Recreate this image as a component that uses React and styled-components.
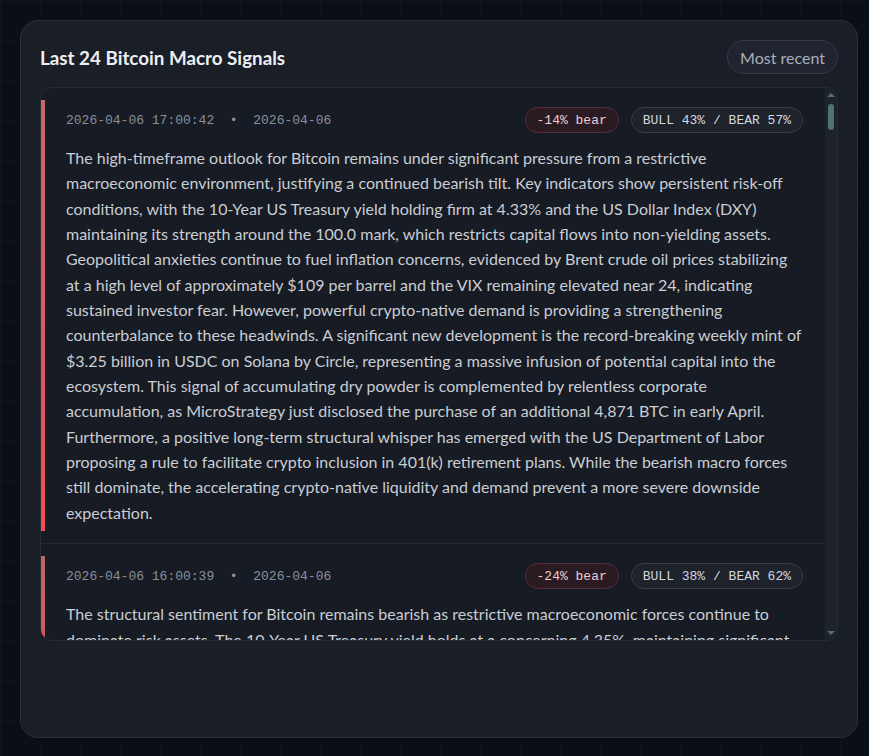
import React from "react";
import styled, { createGlobalStyle } from "styled-components";

const signals = [
  {
    time: "2026-04-06 17:00:42",
    date: "2026-04-06",
    delta: "-14% bear",
    split: "BULL 43% / BEAR 57%",
    text:
      "The high-timeframe outlook for Bitcoin remains under significant pressure from a restrictive macroeconomic environment, justifying a continued bearish tilt. Key indicators show persistent risk-off conditions, with the 10-Year US Treasury yield holding firm at 4.33% and the US Dollar Index (DXY) maintaining its strength around the 100.0 mark, which restricts capital flows into non-yielding assets. Geopolitical anxieties continue to fuel inflation concerns, evidenced by Brent crude oil prices stabilizing at a high level of approximately $109 per barrel and the VIX remaining elevated near 24, indicating sustained investor fear. However, powerful crypto-native demand is providing a strengthening counterbalance to these headwinds. A significant new development is the record-breaking weekly mint of $3.25 billion in USDC on Solana by Circle, representing a massive infusion of potential capital into the ecosystem. This signal of accumulating dry powder is complemented by relentless corporate accumulation, as MicroStrategy just disclosed the purchase of an additional 4,871 BTC in early April. Furthermore, a positive long-term structural whisper has emerged with the US Department of Labor proposing a rule to facilitate crypto inclusion in 401(k) retirement plans. While the bearish macro forces still dominate, the accelerating crypto-native liquidity and demand prevent a more severe downside expectation.",
  },
  {
    time: "2026-04-06 16:00:39",
    date: "2026-04-06",
    delta: "-24% bear",
    split: "BULL 38% / BEAR 62%",
    text:
      "The structural sentiment for Bitcoin remains bearish as restrictive macroeconomic forces continue to dominate risk assets. The 10-Year US Treasury yield holds at a concerning 4.35%, maintaining significant pressure on liquidity, while the US Dollar Index (DXY) stays firm near 100.2. Elevated energy prices and a VIX reading above 23 reinforce a cautious, risk-off posture among investors, even as crypto-native flows offer partial support.",
  },
];

const GlobalStyle = createGlobalStyle`
  html, body {
    margin: 0;
    background-color: #0a0e17;
    background-image:
      linear-gradient(rgba(255,255,255,0.018) 1px, transparent 1px),
      linear-gradient(90deg, rgba(255,255,255,0.018) 1px, transparent 1px);
    background-size: 40px 40px;
  }
  * { box-sizing: border-box; }
`;

const Page = styled.div`
  padding: 20px 11px 18px 20px;
  font-family: Lato, "Noto Sans", sans-serif;
`;

const Card = styled.section`
  height: 718px;
  padding: 19px 19px;
  background: #1a1e27;
  border: 1px solid #2a2f3a;
  border-radius: 18px;
  display: flex;
  flex-direction: column;
  gap: 13px;
`;

const Header = styled.div`
  display: flex;
  align-items: center;
  justify-content: space-between;
`;

const Title = styled.h2`
  margin: 0;
  font-size: 18.8px;
  font-weight: 700;
  color: #eceef2;
`;

const SortButton = styled.button`
  height: 34px;
  padding: 0 12px;
  border-radius: 17px;
  border: 1px solid #333a46;
  background: #1f2430;
  color: #a9afb9;
  font-family: inherit;
  font-size: 16px;
`;

const ListFrame = styled.div`
  height: 554px;
  display: flex;
  overflow: hidden;
  background: #171b23;
  border: 1px solid #262b35;
  border-radius: 12px;
`;

const Scroller = styled.div`
  flex: 1;
  min-width: 0;
  overflow-y: auto;
  scrollbar-width: none;
  &::-webkit-scrollbar {
    display: none;
  }
`;

/* thin scrollbar rail, as the browser draws it with scrollbar-color */
const Rail = styled.div`
  width: 12px;
  flex: none;
  background: #1e232b;
  display: flex;
  flex-direction: column;
  align-items: center;
`;

const RailArrow = styled.div`
  height: 14px;
  display: flex;
  align-items: center;
  justify-content: center;
  &::before {
    content: "";
    border-left: 4px solid transparent;
    border-right: 4px solid transparent;
    ${({ $down }) =>
      $down ? "border-top: 4px solid #4b7470;" : "border-bottom: 4px solid #4b7470;"}
  }
`;

const RailTrack = styled.div`
  flex: 1;
  padding-top: 2px;
`;

const Thumb = styled.div`
  width: 6px;
  height: 26px;
  border-radius: 3px;
  background: #4b7470;
`;

const Row = styled.article`
  padding: 12px 0;
  border-bottom: 1px solid #262b34;
`;

const Entry = styled.div`
  border-left: 4px solid transparent;
  border-image: linear-gradient(${({ $from }) => $from}, ${({ $to }) => $to}) 1;
  padding: 7px 22px 6px 21px;
`;

const Meta = styled.div`
  display: flex;
  align-items: center;
  justify-content: space-between;
  height: 26px;
`;

const Stamp = styled.span`
  font-family: "Liberation Mono", monospace;
  font-size: 13px;
  color: #8a909a;
  white-space: pre;
`;

const Badges = styled.div`
  display: flex;
  gap: 12px;
`;

const Badge = styled.span`
  height: 26px;
  display: inline-flex;
  align-items: center;
  padding: 0 11px;
  border-radius: 13px;
  font-family: "Liberation Mono", monospace;
  font-size: 13px;
  color: ${({ $tone }) => ($tone === "bear" ? "#f1cccc" : "#d2d8e0")};
  background: ${({ $tone }) => ($tone === "bear" ? "#2a1b22" : "#1d222b")};
  border: 1px solid ${({ $tone }) => ($tone === "bear" ? "#5a2c35" : "#373d48")};
`;

const Body = styled.p`
  margin: 12px -2px 0 0;
  font-size: 16px;
  line-height: 25.35px;
  color: #c9cdd4;
`;

export default function App() {
  return (
    <Page>
      <GlobalStyle />
      <Card>
        <Header>
          <Title>Last 24 Bitcoin Macro Signals</Title>
          <SortButton>Most recent</SortButton>
        </Header>
        <ListFrame>
          <Scroller>
            {signals.map((s, i) => (
              <Row key={s.time}>
                <Entry $from={i === 0 ? "#c7686d" : "#b8646a"} $to="#f04c58">
                  <Meta>
                    <Stamp>{`${s.time}  •  ${s.date}`}</Stamp>
                    <Badges>
                      <Badge $tone="bear">{s.delta}</Badge>
                      <Badge>{s.split}</Badge>
                    </Badges>
                  </Meta>
                  <Body>{s.text}</Body>
                </Entry>
              </Row>
            ))}
          </Scroller>
          <Rail>
            <RailArrow />
            <RailTrack>
              <Thumb />
            </RailTrack>
            <RailArrow $down />
          </Rail>
        </ListFrame>
      </Card>
    </Page>
  );
}
